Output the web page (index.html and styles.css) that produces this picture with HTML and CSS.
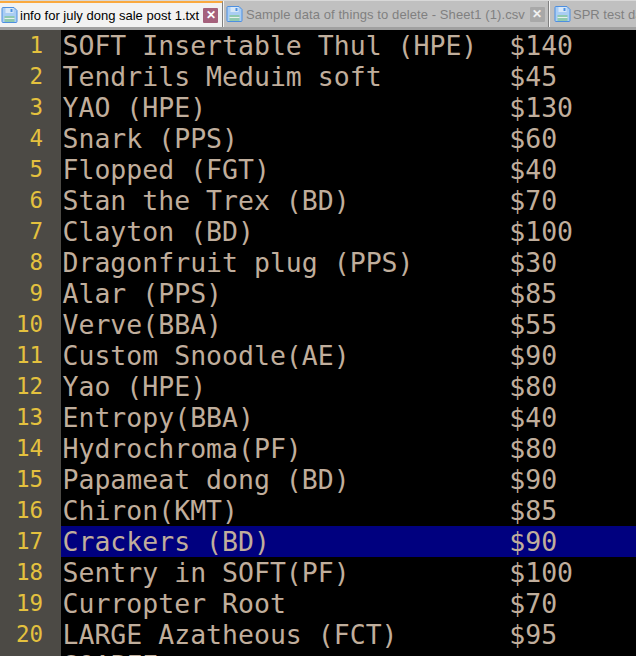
FILE: index.html
```html
<!DOCTYPE html>
<html lang="en">
<head>
<meta charset="utf-8">
<title>info for july dong sale post 1.txt</title>
<link rel="stylesheet" href="styles.css">
</head>
<body>
<svg class="defs" width="0" height="0" aria-hidden="true">
  <symbol id="disk" viewBox="0 0 16 16">
    <path d="M.5 1.5a1 1 0 0 1 1-1h11l3 3v11a1 1 0 0 1-1 1h-13a1 1 0 0 1-1-1z" fill="#a9cdf4" stroke="#4d8fe0"/>
    <rect x="4" y="1" width="8" height="5" fill="#d8e8f8"/>
    <rect x="9" y="2" width="2" height="3" fill="#4d8fe0"/>
    <rect x="3" y="9" width="10" height="6" fill="#8fc9b0"/>
    <rect x="3" y="11" width="10" height="1" fill="#e6f0ea"/>
  </symbol>
</svg>
<div class="tabbar">
  <div class="tab tab-active">
    <svg class="disk"><use href="#disk"/></svg>
    <span class="tab-label">info for july dong sale post 1.txt</span>
    <span class="close close-active">✕</span>
  </div>
  <div class="tab tab-second">
    <svg class="disk"><use href="#disk"/></svg>
    <span class="tab-label">Sample data of things to delete - Sheet1 (1).csv</span>
    <span class="close">✕</span>
  </div>
  <div class="tab tab-last">
    <svg class="disk"><use href="#disk"/></svg>
    <span class="tab-label">SPR test data.txt</span>
  </div>
</div>
<div class="editor">
  <div class="line"><span class="num">1</span><span class="code">SOFT Insertable Thul (HPE)  $140</span></div>
  <div class="line"><span class="num">2</span><span class="code">Tendrils Meduim soft        $45</span></div>
  <div class="line"><span class="num">3</span><span class="code">YAO (HPE)                   $130</span></div>
  <div class="line"><span class="num">4</span><span class="code">Snark (PPS)                 $60</span></div>
  <div class="line"><span class="num">5</span><span class="code">Flopped (FGT)               $40</span></div>
  <div class="line"><span class="num">6</span><span class="code">Stan the Trex (BD)          $70</span></div>
  <div class="line"><span class="num">7</span><span class="code">Clayton (BD)                $100</span></div>
  <div class="line"><span class="num">8</span><span class="code">Dragonfruit plug (PPS)      $30</span></div>
  <div class="line"><span class="num">9</span><span class="code">Alar (PPS)                  $85</span></div>
  <div class="line"><span class="num">10</span><span class="code">Verve(BBA)                  $55</span></div>
  <div class="line"><span class="num">11</span><span class="code">Custom Snoodle(AE)          $90</span></div>
  <div class="line"><span class="num">12</span><span class="code">Yao (HPE)                   $80</span></div>
  <div class="line"><span class="num">13</span><span class="code">Entropy(BBA)                $40</span></div>
  <div class="line"><span class="num">14</span><span class="code">Hydrochroma(PF)             $80</span></div>
  <div class="line"><span class="num">15</span><span class="code">Papameat dong (BD)          $90</span></div>
  <div class="line"><span class="num">16</span><span class="code">Chiron(KMT)                 $85</span></div>
  <div class="line line-selected"><span class="num">17</span><span class="code">Crackers (BD)               $90</span></div>
  <div class="line"><span class="num">18</span><span class="code">Sentry in SOFT(PF)          $100</span></div>
  <div class="line"><span class="num">19</span><span class="code">Curropter Root              $70</span></div>
  <div class="line"><span class="num">20</span><span class="code">LARGE Azatheous (FCT)       $95</span></div>
  <div class="line"><span class="num">21</span><span class="code">SOAPFE</span></div>
</div>
</body>
</html>
```
FILE: styles.css
```css
html, body {
  margin: 0;
  padding: 0;
  width: 636px;
  height: 656px;
  overflow: hidden;
  background: #000;
}
.defs { position: absolute; }
.tabbar {
  display: flex;
  height: 30px;
  box-sizing: border-box;
  background: #c0c0c0;
  border-bottom: 3px solid #a0a0a0;
  border-top: 1px solid #d8d8d8;
  font-family: "Liberation Sans", Arial, sans-serif;
  font-size: 13px;
  overflow: hidden;
}
.tab {
  display: flex;
  align-items: center;
  flex: none;
  box-sizing: border-box;
  height: 26px;
  padding-left: 2px;
  color: #808080;
  border-right: 1px solid #808080;
  box-shadow: 1px 0 0 #f4f4f4;
  margin-right: 1px;
  white-space: nowrap;
}
.tab-active {
  width: 223px;
  padding-left: 1px;
  margin-top: -1px;
  height: 27px;
  border-top: 3px solid #faa93f;
  background: #f2f2f2;
  color: #000;
}
.tab-second {
  width: 325px;
  letter-spacing: 0.09px;
}
.tab-last { border-right: 0; box-shadow: none; flex: 1; padding-left: 4px; }
.disk { width: 17px; height: 16px; flex: none; margin-right: 2px; }
.tab-second .disk { margin-right: 3px; }
.tab-label { flex: 1; padding-top: 1px; }
.close {
  display: flex;
  align-items: center;
  justify-content: center;
  width: 15px;
  height: 15px;
  margin-right: 3px;
  border-radius: 1px;
  background: #a8a8a8;
  color: #f0f0f0;
  font-size: 12px;
  font-weight: bold;
}
.close-active { margin-right: 4px; background: #a5617c; color: #fff; }
.editor {
  font-family: "DejaVu Sans Mono", monospace;
  font-size: 26.5px;
  line-height: 31px;
  color: #c0ae9c;
}
.line { display: flex; height: 31px; }
.num {
  flex: none;
  width: 61px;
  box-sizing: border-box;
  padding-right: 18px;
  text-align: right;
  background: #4c4a45;
  color: #e4c13e;
  font-size: 22.5px;
}
.code {
  flex: none;
  padding-left: 2px;
  white-space: pre;
  transform: translateX(-0.5px);
}
.line-selected { background: #00007f; }
.line-selected .code { flex: 1; }
```
